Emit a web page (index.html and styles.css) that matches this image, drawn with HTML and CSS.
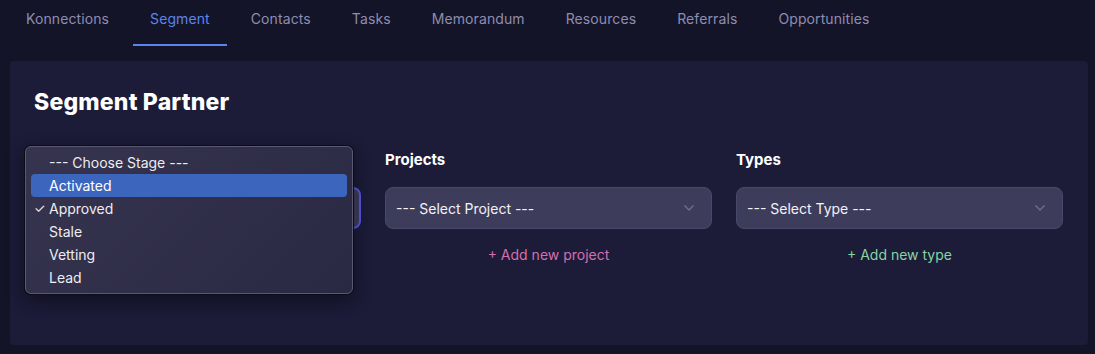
FILE: index.html
```html
<!DOCTYPE html>
<html lang="en">
<head>
  <meta charset="UTF-8" />
  <title>Segment Partner</title>
  <link rel="stylesheet" href="styles.css">
</head>
<body>

<nav class="tabs">
  <a class="tab">Konnections</a>
  <a class="tab active">Segment</a>
  <a class="tab">Contacts</a>
  <a class="tab">Tasks</a>
  <a class="tab">Memorandum</a>
  <a class="tab">Resources</a>
  <a class="tab">Referrals</a>
  <a class="tab">Opportunities</a>
</nav>

<section class="card">
  <h1>Segment Partner</h1>

  <div class="fields">
    <div class="field stage-field">
      <label class="covered">Stages</label>
      <div class="select focused">
        <span class="covered">Approved</span>
        <svg class="chev" width="12" height="8" viewBox="0 0 12 8"><path d="M1.5 1.5 6 6l4.5-4.5" fill="none" stroke="currentColor" stroke-width="1.5"/></svg>
      </div>

      <ul class="popup">
        <li>--- Choose Stage ---</li>
        <li class="hover">Activated</li>
        <li class="checked">Approved</li>
        <li>Stale</li>
        <li>Vetting</li>
        <li>Lead</li>
      </ul>
    </div>

    <div class="field">
      <label>Projects</label>
      <div class="select">
        <span>--- Select Project ---</span>
        <svg class="chev" width="12" height="8" viewBox="0 0 12 8"><path d="M1.5 1.5 6 6l4.5-4.5" fill="none" stroke="currentColor" stroke-width="1.5"/></svg>
      </div>
      <a class="add pink">+ Add new project</a>
    </div>

    <div class="field">
      <label>Types</label>
      <div class="select">
        <span>--- Select Type ---</span>
        <svg class="chev" width="12" height="8" viewBox="0 0 12 8"><path d="M1.5 1.5 6 6l4.5-4.5" fill="none" stroke="currentColor" stroke-width="1.5"/></svg>
      </div>
      <a class="add green">+ Add new type</a>
    </div>
  </div>
</section>

</body>
</html>
```

FILE: styles.css
```css
body {
  margin: 0;
  background-color: #141428;
  font-family: Inter, "Noto Sans", sans-serif;
  color: #fff;
  height: 354px;
  overflow: hidden;
}
.tabs {
  display: flex;
  gap: 7px;
  padding: 0 0 0 9px;
  height: 46px;
}
.tab {
  padding: 10px 17px 0;
  font-size: 14px;
  letter-spacing: 0.1px;
  color: #8e8db0;
  border-bottom: 2px solid transparent;
  box-sizing: border-box;
}
.tab.active {
  color: #5b84ee;
  border-bottom-color: #5b84ee;
}
.card {
  margin: 15px 7px 0 10px;
  height: 284px;
  background-color: #1c1b38;
  border-radius: 4px;
  padding: 0 24px;
  box-sizing: border-box;
}
h1 {
  margin: 0;
  padding-top: 27px;
  font-size: 23px;
  font-weight: 800;
  letter-spacing: 0.2px;
}
.fields {
  display: grid;
  grid-template-columns: 327px 327px 327px;
  gap: 24px;
  margin-top: 34px;
}
.field {
  position: relative;
  display: flex;
  flex-direction: column;
}
label {
  font-size: 15px;
  font-weight: 700;
  height: 20px;
  line-height: 20px;
}
.covered {
  visibility: hidden;
}
.select {
  margin-top: 17px;
  height: 42px;
  box-sizing: border-box;
  border: 1px solid #4a4868;
  border-radius: 8px;
  background-color: #3e3c5b;
  display: flex;
  align-items: center;
  justify-content: space-between;
  padding: 0 16px 0 10px;
  font-size: 14px;
  color: #f2f2f8;
}
.select.focused {
  border: 2px solid #5457e0;
}
.chev {
  color: #6c6a90;
}
.add {
  margin-top: 17px;
  text-align: center;
  font-size: 14px;
}
.pink { color: #d56fb0; }
.green { color: #86d6a4; }

.popup {
  position: absolute;
  left: -9px;
  top: -4px;
  width: 328px;
  margin: 0;
  padding: 4px 5px;
  list-style: none;
  box-sizing: border-box;
  background: linear-gradient(135deg, #36344f, #2a2944);
  border: 1px solid #5a5970;
  border-radius: 6px;
  box-shadow: 0 0 0 1px #0c0c18, 0 6px 18px rgba(0, 0, 0, 0.45);
}
.popup li {
  height: 23px;
  line-height: 23px;
  padding-left: 18px;
  border-radius: 4px;
  font-size: 14px;
  color: #ededf2;
  position: relative;
}
.popup li.hover {
  background-color: #3c66bd;
  color: #fff;
}
.popup li.checked::before {
  content: "\2713";
  position: absolute;
  left: 3px;
  font-size: 13px;
}
```
